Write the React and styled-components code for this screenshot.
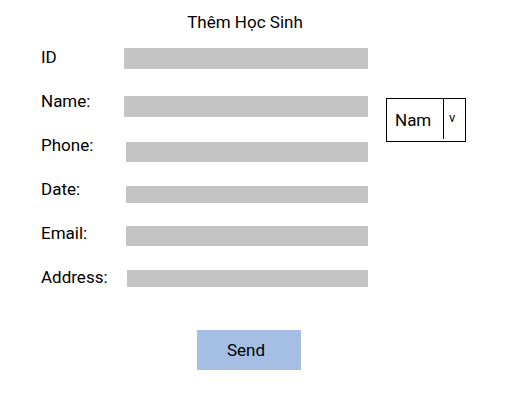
import React from 'react';
import styled, { createGlobalStyle } from 'styled-components';

const GlobalStyle = createGlobalStyle`
  body {
    margin: 0;
    background: #FFFFFF;
    font-family: Roboto, "Liberation Sans", sans-serif;
    color: #000;
  }
`;

const Page = styled.div`
  padding-top: 12px;
  width: 507px;
`;

const Title = styled.h1`
  margin: 0;
  width: 490px;
  text-align: center;
  font-size: 17px;
  font-weight: 400;
  line-height: 20px;
`;

const Form = styled.form`
  margin-top: 16px;
  padding-left: 41px;
`;

const Row = styled.div`
  display: flex;
  align-items: flex-start;
  height: 44px;
`;

const Label = styled.label`
  width: 83px;
  font-size: 17px;
  line-height: 18px;
`;

const Field = styled.div`
  box-sizing: border-box;
  margin-left: ${(p) => p.$dx}px;
  margin-top: ${(p) => p.$dy}px;
  width: ${(p) => 244 - p.$dx}px;
  height: ${(p) => p.$h}px;
  background: #C4C4C4;
`;

const Select = styled.div`
  box-sizing: border-box;
  display: flex;
  margin-left: 18px;
  margin-top: 6px;
  width: 80px;
  height: 44px;
  border: 1px solid #000;
`;

const SelectValue = styled.div`
  display: flex;
  align-items: center;
  width: 57px;
  padding: 2px 0 0 8px;
  box-sizing: border-box;
  border-right: 1px solid #000;
  margin-bottom: 2px;
  font-size: 17px;
  line-height: 20px;
`;

const SelectArrow = styled.div`
  padding: 11px 0 0 5px;
  font-size: 13px;
  line-height: 15px;
`;

const SendButton = styled.button`
  display: block;
  margin: 18px 0 0 197px;
  width: 104px;
  height: 40px;
  padding: 0 0 0 30px;
  text-align: left;
  border: none;
  background: #A4BFE3;
  font-family: Roboto, "Liberation Sans", sans-serif;
  font-size: 17px;
  color: #000;
`;

const fields = [
  { label: 'ID', dx: 0, dy: 0, h: 21 },
  { label: 'Name:', dx: 0, dy: 4, h: 21, select: true },
  { label: 'Phone:', dx: 2, dy: 6, h: 20 },
  { label: 'Date:', dx: 2, dy: 6, h: 17 },
  { label: 'Email:', dx: 2, dy: 2, h: 20 },
  { label: 'Address:', dx: 3, dy: 2, h: 17 },
];

const App = () => (
  <Page>
    <GlobalStyle />
    <Title>Thêm Học Sinh</Title>
    <Form onSubmit={(e) => e.preventDefault()}>
      {fields.map((f) => (
        <Row key={f.label}>
          <Label>{f.label}</Label>
          <Field $dx={f.dx} $dy={f.dy} $h={f.h} />
          {f.select && (
            <Select>
              <SelectValue>Nam</SelectValue>
              <SelectArrow>v</SelectArrow>
            </Select>
          )}
        </Row>
      ))}
    </Form>
    <SendButton type="button">Send</SendButton>
  </Page>
);

export default App;
